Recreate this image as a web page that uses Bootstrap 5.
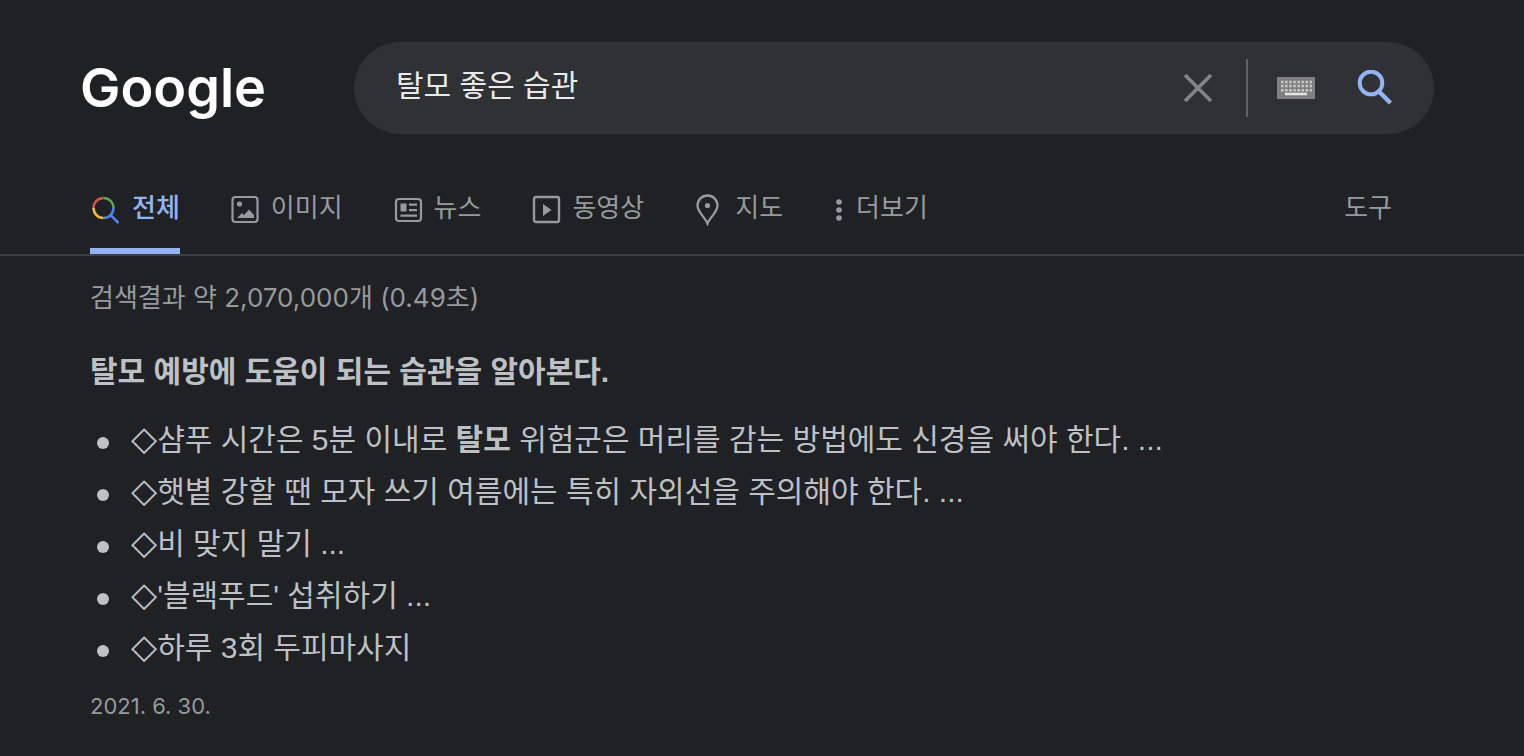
<!DOCTYPE html>
<html lang="ko">
<head>
<meta charset="utf-8">
<meta name="viewport" content="width=device-width, initial-scale=1">
<title>탈모 좋은 습관 - Google 검색</title>
<link href="https://cdn.jsdelivr.net/npm/bootstrap@5.3.0/dist/css/bootstrap.min.css" rel="stylesheet">
<style>
  body { background: #202124; color: #bdc1c6; font-family: "Liberation Sans", "Noto Sans CJK KR", sans-serif; }
  .top-bar { padding: 42px 90px 0 80px; gap: 90px; }
  .brand { width: 184px; font: 600 54px/92px Inter, sans-serif; color: #fff; }
  .search-box { height: 92px; background: #303134; padding: 0 41px 0 42px; }
  .search-box input { min-width: 0; font-size: 30px; line-height: 44px; color: #e8eaed; outline: 0; }
  .search-box input::-webkit-search-cancel-button { display: none; }
  .search-box button { line-height: 0; }
  .divider { width: 2px; height: 58px; background: #5f6368; margin: 0 29px 0 32px; }
  .input-tool { margin-right: 42px; }
  .tab-bar { margin-top: 32px; padding: 0 132px 0 90px; border-bottom: 2px solid #3c4043; }
  .tab-list { gap: 51px; }
  .tab-link { display: flex; align-items: center; gap: 10px; height: 88px; padding-bottom: 4px; font-size: 26px; line-height: 40px; color: #969a9f; text-decoration: none; white-space: nowrap; }
  .tab-link svg { margin-top: 4px; }
  .tab-link.active { gap: 12px; color: #93b4f4; font-weight: 500; box-shadow: inset 0 -6px #93b4f4; }
  .results { padding: 22px 90px 24px; }
  .stats { font: 26px/40px Inter, "Noto Sans CJK KR", sans-serif; color: #969a9f; margin-bottom: 32px; }
  .answer-title { font-size: 30px; line-height: 44px; font-weight: 700; margin-bottom: 20px; }
  .answer-list { font-size: 30px; line-height: 52px; padding-left: 41px; margin-bottom: 16px; list-style: none; }
  .answer-list li::before { content: ""; display: inline-block; width: 12px; height: 12px; margin: 0 22px 0 -34px; border-radius: 50%; background: currentColor; vertical-align: 1px; }
  .diamond { font-family: "DejaVu Sans", sans-serif; font-size: 34px; line-height: 1; }
  .answer-date { font: 22px/32px Inter, sans-serif; color: #969a9f; }
</style>
</head>
<body>
<header>
  <div class="top-bar d-flex align-items-center">
    <a href="#" class="brand flex-shrink-0 text-decoration-none">Google</a>
    <form class="search-box d-flex align-items-center flex-grow-1 rounded-pill" role="search">
      <input type="search" class="flex-grow-1 bg-transparent border-0 p-0 pb-1" aria-label="검색" value="탈모 좋은 습관">
      <button type="reset" class="btn p-0 border-0" aria-label="지우기">
        <svg width="32" height="32" viewBox="0 0 32 32" stroke="#80868b" stroke-width="3.5"><path d="M3 3 29 29M29 3 3 29"/></svg>
      </button>
      <span class="divider"></span>
      <button type="button" class="input-tool btn p-0 border-0" aria-label="입력 도구">
        <svg width="38" height="22" viewBox="0 0 38 22"><path fill="#808080" d="M0 0h38v22H0z"/><path stroke="#c8c8c8" stroke-width="2.5" stroke-dasharray="2.5 1.6" d="M4 5h31M4 9h31M4 13.200h31"/><path stroke="#e4e4e4" stroke-width="2.500" d="M8 17h22"/></svg>
      </button>
      <button type="submit" class="btn p-0 border-0" aria-label="Google 검색">
        <svg width="36" height="36" viewBox="0 0 36 36" fill="none" stroke="#93b4f4"><circle cx="14" cy="13" r="11.300" stroke-width="4"/><path stroke-width="4.500" d="m22.500 22 11 11"/></svg>
      </button>
    </form>
  </div>
  <nav class="tab-bar d-flex justify-content-between">
    <div class="tab-list d-flex">
      <a href="#" class="tab-link active" aria-current="page">
        <svg width="30" height="30" viewBox="0 0 30 30" fill="none" stroke-width="2.500"><path stroke="#de5246" d="M3.500 13A10 10 0 0 1 13.500 3"/><path stroke="#58a55c" d="M13.500 3a10 10 0 0 1 10 10"/><path stroke="#fbbc3d" d="M3.500 13a10 10 0 0 0 10 10"/><path stroke="#5086ec" d="M23.500 13a10 10 0 0 1-10 10M20.500 20l8 8"/></svg>
        전체</a>
      <a href="#" class="tab-link">
        <svg width="30" height="30" viewBox="0 0 30 30"><rect x="1.500" y="2" width="25" height="25" rx="3" fill="none" stroke="currentColor" stroke-width="2.200"/><circle cx="8.500" cy="9" r="2.600" fill="currentColor"/><path fill="currentColor" d="m6 23 5-5 2 2 5-5.500 5 5.500v3z"/></svg>
        이미지</a>
      <a href="#" class="tab-link">
        <svg width="30" height="30" viewBox="0 0 30 30"><rect x="2" y="4" width="25" height="22" rx="3" fill="none" stroke="currentColor" stroke-width="2.200"/><path fill="currentColor" d="M6.500 8.500h6v8h-6zM15 8.500h8v2.200h-8zM15 14h8v2.200h-8zM6.500 19.500H23v2.200H6.500z"/></svg>
        뉴스</a>
      <a href="#" class="tab-link">
        <svg width="30" height="30" viewBox="0 0 30 30"><rect x="2" y="2" width="25" height="25" rx="2" fill="none" stroke="currentColor" stroke-width="2.400"/><path fill="currentColor" d="m11 9 8.500 6-8.500 6z"/></svg>
        동영상</a>
      <a href="#" class="tab-link">
        <svg width="30" height="32" viewBox="0 0 30 32"><path fill="none" stroke="currentColor" stroke-width="2.300" d="M12.500 29.500C10.500 24 2.500 18 2.500 11.500a10 10 0 0 1 20 0C22.500 18 14.500 24 12.500 29.500z"/><circle cx="12.500" cy="11.500" r="2.600" fill="currentColor"/></svg>
        지도</a>
      <a href="#" class="tab-link">
        <svg width="12" height="24" viewBox="0 0 12 24" fill="currentColor"><circle cx="5" cy="4" r="2.800"/><circle cx="5" cy="12" r="2.800"/><circle cx="5" cy="20" r="2.800"/></svg>
        더보기</a>
    </div>
    <a href="#" class="tab-link">도구</a>
  </nav>
</header>
<main class="results">
  <p class="stats">검색결과 약 2,070,000개 (0.49초)</p>
  <h1 class="answer-title">탈모 예방에 도움이 되는 습관을 알아본다.</h1>
  <ul class="answer-list">
    <li><span class="diamond">◇</span>샴푸 시간은 5분 이내로 <b>탈모</b> 위험군은 머리를 감는 방법에도 신경을 써야 한다. ...</li>
    <li><span class="diamond">◇</span>햇볕 강할 땐 모자 쓰기 여름에는 특히 자외선을 주의해야 한다. ...</li>
    <li><span class="diamond">◇</span>비 맞지 말기 ...</li>
    <li><span class="diamond">◇</span>'블랙푸드' 섭취하기 ...</li>
    <li><span class="diamond">◇</span>하루 3회 두피마사지</li>
  </ul>
  <p class="answer-date mb-0">2021. 6. 30.</p>
</main>
<script src="https://cdn.jsdelivr.net/npm/bootstrap@5.3.0/dist/js/bootstrap.bundle.min.js"></script>
</body>
</html>
